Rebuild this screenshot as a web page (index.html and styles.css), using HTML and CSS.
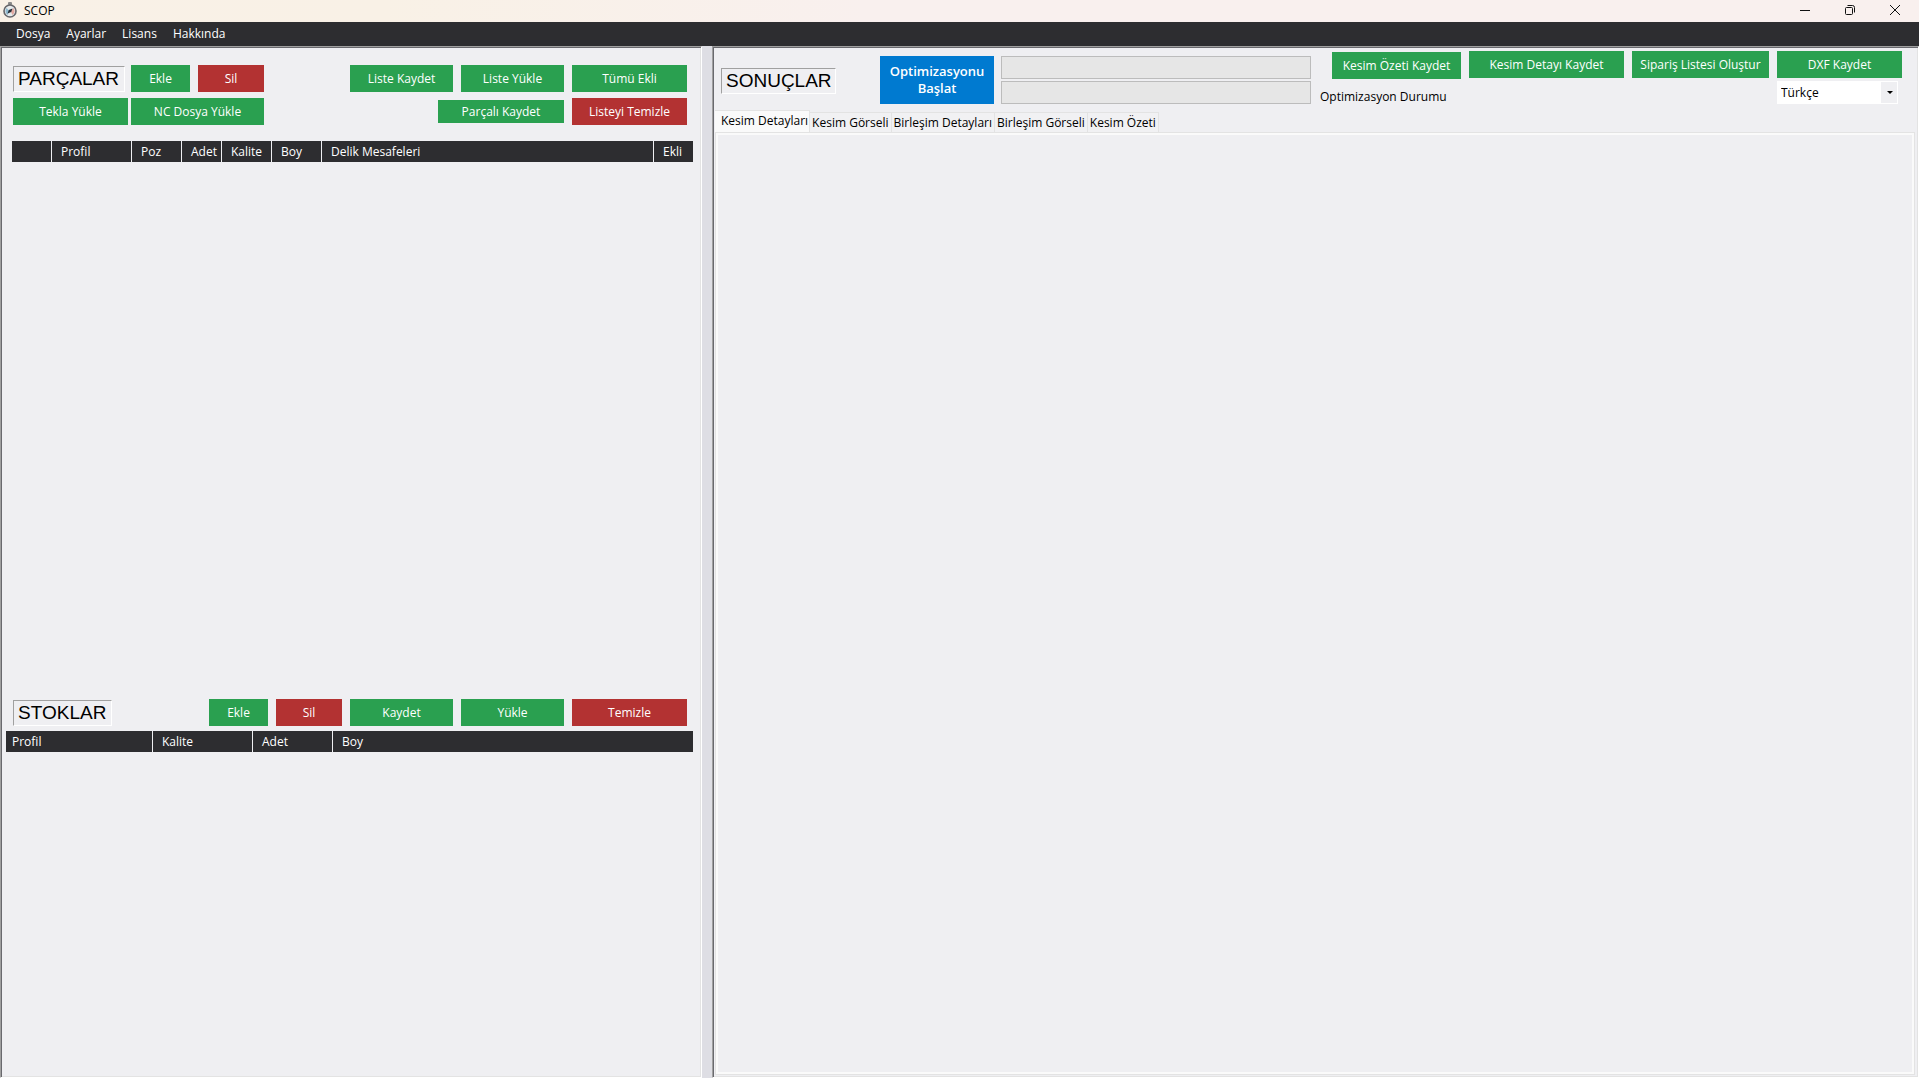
FILE: index.html
```html
<!DOCTYPE html>
<html lang="tr">
<head>
    <meta charset="UTF-8">
    <meta name="viewport" content="width=device-width, initial-scale=1.0">
    <title>SCOP</title>
    <link rel="stylesheet" href="styles.css">
</head>
<body>
    <header class="title-bar">
        <svg class="app-icon" viewBox="0 0 16 16" width="16" height="16">
            <rect x="6" y="0" width="4" height="3" rx="1" fill="#8a8a8a"/>
            <circle cx="8" cy="9" r="6" fill="#e6eaec" stroke="#66666a" stroke-width="1.6"/>
            <path d="M4.5 6a5 5 0 0 0 1 7l2-4z" fill="#8fb9cf"/>
            <path d="M11.5 6a5 5 0 0 1-1 7l-2-4z" fill="#e2a8a0"/>
            <path d="M10.5 6.5L9.2 10 5.5 11.5 6.8 8z" fill="#26303a"/>
        </svg>
        <span class="app-title">SCOP</span>
        <div class="window-buttons">
            <button type="button" aria-label="Simge durumuna küçült">
                <svg viewBox="0 0 12 12" width="12" height="12"><path d="M1 6.5h10"/></svg>
            </button>
            <button type="button" aria-label="Önceki boyut">
                <svg viewBox="0 0 12 12" width="12" height="12"><rect x="1.5" y="3.5" width="7" height="7" rx="1"/><path d="M3.5 1.5h5a2 2 0 0 1 2 2v5"/></svg>
            </button>
            <button type="button" aria-label="Kapat">
                <svg viewBox="0 0 12 12" width="12" height="12"><path d="M1 1l10 10M11 1L1 11"/></svg>
            </button>
        </div>
    </header>

    <nav class="menu-bar">
        <a href="#">Dosya</a>
        <a href="#">Ayarlar</a>
        <a href="#">Lisans</a>
        <a href="#">Hakkında</a>
    </nav>

    <main class="workspace">
        <div class="panel left-panel">
            <section class="parts">
                <div class="toolbar">
                    <h2 class="panel-label parts-label">PARÇALAR</h2>
                    <button type="button" class="btn btn-add">Ekle</button>
                    <button type="button" class="btn btn-delete danger">Sil</button>
                    <div class="toolbar-end">
                        <button type="button" class="btn btn-list">Liste Kaydet</button>
                        <button type="button" class="btn btn-list">Liste Yükle</button>
                        <button type="button" class="btn btn-wide">Tümü Ekli</button>
                    </div>
                </div>
                <div class="toolbar import-bar">
                    <button type="button" class="btn btn-wide">Tekla Yükle</button>
                    <button type="button" class="btn btn-nc">NC Dosya Yükle</button>
                    <div class="toolbar-end">
                        <button type="button" class="btn btn-partial">Parçalı Kaydet</button>
                        <button type="button" class="btn btn-wide danger">Listeyi Temizle</button>
                    </div>
                </div>
                <table class="grid-table parts-table">
                    <colgroup>
                        <col class="w-40"><col class="w-80"><col class="w-50"><col class="w-40"><col class="w-50"><col class="w-50"><col><col class="w-39">
                    </colgroup>
                    <thead>
                        <tr>
                            <th></th>
                            <th>Profil</th>
                            <th>Poz</th>
                            <th>Adet</th>
                            <th>Kalite</th>
                            <th>Boy</th>
                            <th>Delik Mesafeleri</th>
                            <th>Ekli</th>
                        </tr>
                    </thead>
                </table>
            </section>

            <section class="stocks">
                <div class="toolbar">
                    <h2 class="panel-label stocks-label">STOKLAR</h2>
                    <div class="toolbar-end">
                        <button type="button" class="btn btn-add">Ekle</button>
                        <button type="button" class="btn btn-delete danger">Sil</button>
                        <button type="button" class="btn btn-list">Kaydet</button>
                        <button type="button" class="btn btn-list">Yükle</button>
                        <button type="button" class="btn btn-wide danger">Temizle</button>
                    </div>
                </div>
                <table class="grid-table stocks-table">
                    <colgroup>
                        <col class="w-147"><col class="w-100"><col class="w-80"><col>
                    </colgroup>
                    <thead>
                        <tr>
                            <th>Profil</th>
                            <th>Kalite</th>
                            <th>Adet</th>
                            <th>Boy</th>
                        </tr>
                    </thead>
                </table>
            </section>
        </div>

        <div class="splitter"></div>

        <section class="panel right-panel">
            <div class="results-bar">
                <h2 class="panel-label results-label">SONUÇLAR</h2>
                <button type="button" class="btn btn-start">Optimizasyonu Başlat</button>
                <div class="progress-group">
                    <div class="progress" role="progressbar" aria-labelledby="status"></div>
                    <div class="progress" role="progressbar" aria-labelledby="status"></div>
                </div>
                <div class="status-group">
                    <button type="button" class="btn btn-summary">Kesim Özeti Kaydet</button>
                    <span class="status" id="status">Optimizasyon Durumu</span>
                </div>
                <div class="export-group">
                    <button type="button" class="btn btn-detail">Kesim Detayı Kaydet</button>
                    <button type="button" class="btn btn-order">Sipariş Listesi Oluştur</button>
                    <div class="dxf-group">
                        <button type="button" class="btn btn-dxf">DXF Kaydet</button>
                        <div class="language">
                            <select aria-label="Dil">
                                <option>Türkçe</option>
                                <option>English</option>
                            </select>
                            <span class="arrow"></span>
                        </div>
                    </div>
                </div>
            </div>

            <div class="tabs" role="tablist">
                <button type="button" class="tab active" role="tab" aria-selected="true">Kesim Detayları</button>
                <button type="button" class="tab" role="tab">Kesim Görseli</button>
                <button type="button" class="tab" role="tab">Birleşim Detayları</button>
                <button type="button" class="tab" role="tab">Birleşim Görseli</button>
                <button type="button" class="tab" role="tab">Kesim Özeti</button>
            </div>
            <div class="tab-page" role="tabpanel"></div>
        </section>
    </main>
</body>
</html>
```
FILE: styles.css
```css
* {
    box-sizing: border-box;
}

body {
    margin: 0;
    height: 100vh;
    display: flex;
    flex-direction: column;
    overflow: hidden;
    background: #efeff2;
    color: #000;
    font-family: 'Open Sans', 'Noto Sans', sans-serif;
    font-size: 12px;
    line-height: 16px;
}

button, select {
    font: inherit;
    border: none;
    padding: 0;
}

/* Başlık çubuğu */
.title-bar {
    height: 22px;
    flex: none;
    display: flex;
    align-items: center;
    padding: 0 2px 2px 2px;
    background: linear-gradient(90deg, #f9f1e7, #f9f1e6 20%, #f9f0ee 45%);
}

.app-title {
    margin-left: 6px;
    padding-top: 1px;
}

.window-buttons {
    margin-left: auto;
    display: flex;
}

.window-buttons button {
    width: 45px;
    height: 18px;
    display: flex;
    align-items: center;
    justify-content: center;
    background: none;
}

.window-buttons svg {
    fill: none;
    stroke: #111;
}

.menu-bar {
    height: 24px;
    flex: none;
    display: flex;
    align-items: center;
    gap: 16px;
    padding-left: 16px;
    background: #2d2d30;
}

.menu-bar a {
    color: #fff;
    text-decoration: none;
}

/* Paneller */
.workspace {
    flex: 1;
    min-height: 0;
    display: grid;
    grid-template-columns: 702fr 10px 1207fr;
}

.panel {
    display: flex;
    flex-direction: column;
    min-width: 0;
    padding: 1px;
    border: 1px solid;
    border-color: #a0a0a0 #fff #fff #a0a0a0;
    box-shadow: inset 1px 1px #69696e, inset -1px -1px #e3e3e3;
}

.splitter {
    background: #dedee4;
}

.panel-label {
    margin: 0;
    height: 26px;
    padding-left: 4px;
    border: 1px solid;
    border-color: #a0a0a0 #fff #fff #a0a0a0;
    font-family: 'Liberation Sans', Arial, sans-serif;
    font-size: 19px;
    font-weight: normal;
    line-height: 24px;
    white-space: nowrap;
}

.parts-label {
    width: 112px;
}

.stocks-label {
    width: 99px;
}

.results-label {
    width: 115px;
    margin-top: 12px;
}

.parts {
    flex: 634;
    padding: 17px 7px 0 10px;
}

.stocks {
    flex: 377;
    padding: 0 7px 0 4px;
}

.toolbar {
    display: flex;
    align-items: center;
    gap: 8px;
    height: 27px;
    padding-right: 6px;
}

.parts .toolbar {
    padding-left: 1px;
}

.parts .panel-label {
    margin-right: -2px;
}

.stocks .toolbar {
    padding-left: 7px;
}

.import-bar {
    margin-top: 6px;
    gap: 3px;
}

.toolbar-end {
    margin-left: auto;
    display: flex;
    align-items: center;
    gap: 8px;
}

/* Butonlar */
.btn {
    height: 27px;
    background: #2aa050;
    color: #fff;
    white-space: nowrap;
    cursor: pointer;
}

.danger {
    background: #b33232;
}

.btn-add {
    width: 59px;
}

.btn-delete {
    width: 66px;
}

.btn-list {
    width: 103px;
}

.btn-wide {
    width: 115px;
}

.btn-nc {
    width: 133px;
}

.btn-partial {
    width: 126px;
    height: 23px;
}

/* Tablolar */
.grid-table {
    width: 100%;
    table-layout: fixed;
    border-collapse: separate;
    border-spacing: 0;
    background: #2d2d30;
    color: #fff;
}

.parts-table {
    margin-top: 16px;
}

.stocks-table {
    margin-top: 5px;
}

.grid-table th {
    height: 21px;
    padding: 0 4px 0 9px;
    border-right: 1px solid #efeff2;
    overflow: hidden;
    font-weight: normal;
    text-align: left;
    white-space: nowrap;
}

.grid-table th:last-child {
    border-right: none;
}

.stocks-table th:first-child {
    padding-left: 6px;
}

.w-39 {
    width: 39px;
}

.w-40 {
    width: 40px;
}

.w-50 {
    width: 50px;
}

.w-80 {
    width: 80px;
}

.w-100 {
    width: 100px;
}

.w-147 {
    width: 147px;
}

/* Sonuçlar */
.results-bar {
    display: flex;
    align-items: flex-start;
    height: 62px;
    padding: 8px 15px 0 7px;
}

.btn-start {
    width: 114px;
    height: 48px;
    margin-left: 44px;
    background: #007ad0;
    font-size: 13px;
    font-weight: 600;
    line-height: 17px;
    white-space: normal;
}

.progress-group {
    flex: 1;
    display: flex;
    flex-direction: column;
    gap: 2px;
    margin-left: 7px;
}

.progress {
    height: 23px;
    background: #e6e6e6;
    border: 1px solid #bcbcbc;
}

.status-group {
    width: 150px;
    margin-top: -4px;
    padding-left: 9px;
    display: flex;
    flex-direction: column;
    gap: 10px;
}

.btn-summary {
    width: 129px;
    align-self: flex-end;
}

.export-group {
    display: flex;
    gap: 8px;
    margin: -5px 0 0 8px;
}

.btn-detail {
    width: 155px;
}

.btn-order {
    width: 137px;
}

.btn-dxf {
    width: 125px;
}

.dxf-group {
    display: flex;
    flex-direction: column;
    gap: 3px;
}

.language {
    position: relative;
    width: 121px;
    height: 23px;
}

.language select {
    width: 100%;
    height: 100%;
    padding-left: 4px;
    appearance: none;
    background: #fff;
    color: #000;
}

.arrow {
    position: absolute;
    top: 1px;
    right: 1px;
    bottom: 1px;
    width: 16px;
    background: #efeff2;
    pointer-events: none;
}

.arrow::after {
    content: '';
    position: absolute;
    top: 9px;
    left: 6px;
    border: 3px solid transparent;
    border-top-color: #000;
    border-bottom: none;
}

/* Sekmeler */
.tabs {
    display: flex;
    align-items: flex-end;
    height: 22px;
    padding-left: 1px;
}

.tab {
    height: 20px;
    padding: 0 2px;
    background: #f1f1f3;
    border: 1px solid #e3e3e3;
    border-left: none;
    border-bottom: none;
    white-space: nowrap;
}

.tab.active {
    height: 22px;
    padding: 0 1px 2px 6px;
    background: #fafafa;
}

.tab-page {
    flex: 1;
    margin: 0 2px 1px 1px;
    border: 1px solid #e3e3e3;
    box-shadow: inset 0 0 0 2px #fafafa;
}
```
